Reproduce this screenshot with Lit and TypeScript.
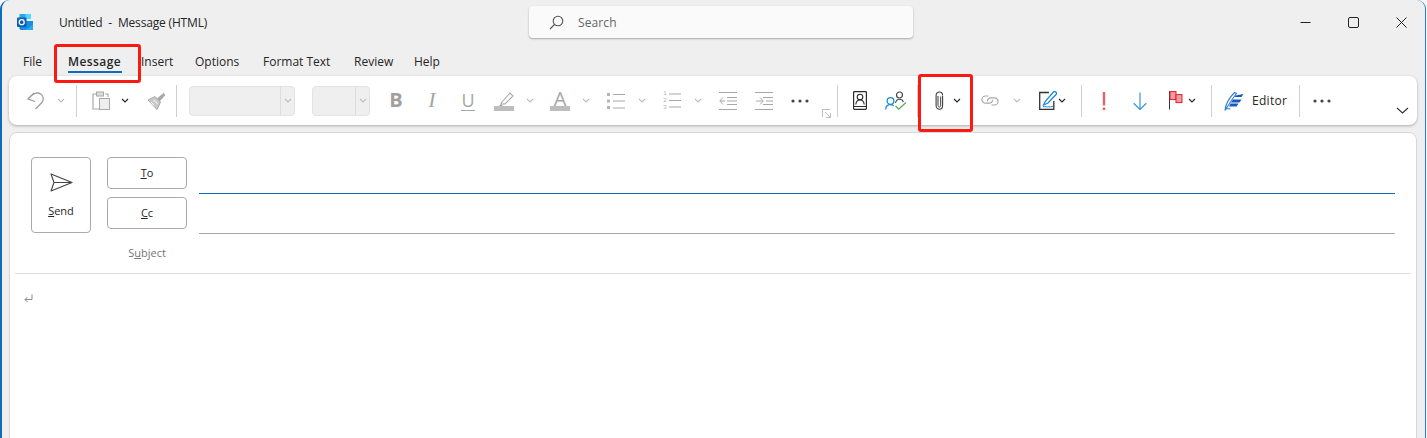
import { LitElement, html, css, svg, TemplateResult } from "lit";
import { customElement } from "lit/decorators.js";

const DIS = "#a8a8a8";
const DARK = "#2b2b2b";

const chev = (c: string) => html`<svg width="8" height="5" viewBox="0 0 8 5"><path d="M1 1l3 3 3-3" fill="none" stroke=${c} stroke-width="1.1"/></svg>`;
const ic = (w: number, h: number, body: unknown) => html`<svg width=${w} height=${h} viewBox="0 0 ${w} ${h}" fill="none">${body}</svg>`;

const undo = ic(20, 20, svg`<path d="M8 2L2 8l7 2.500M2 8C7 2 11 1 14.500 2.800c3.600 2 3.600 6.700.7 9.400L9.500 18" stroke="#9c9c9c" stroke-width="1.300"/>`);
const paste = ic(18, 19, svg`<path d="M5 3H1v15h6M13 3h3v3" stroke=${DIS} stroke-width="1.200"/><rect x="4.500" y="1" width="7" height="4" fill="#ddd" stroke=${DIS}/><rect x="7.500" y="7.500" width="10" height="11" fill="#eee" stroke=${DIS}/>`);
const brush = ic(19, 18, svg`<path d="M1 8l7-3.500 5.500 5.500L10 17.500z" fill="#c9c9c9" stroke=${DIS}/><path d="M10 6.500L16.500 1 18.500 3l-6 6.500" fill=${DIS}/><path d="M4 10l3 3.500M6.500 8l4 4" stroke="#fff"/>`);
const hilite = ic(20, 20, svg`<path d="M8 11l8-9 3 3-8 8H7z" stroke=${DIS} stroke-width="1.100"/><path d="M7 13l-2 2h4" fill=${DIS}/><rect y="15" width="20" height="5" fill="#bdbdbd"/>`);
const bullets = ic(18, 16, svg`<path d="M6 1.500h12M6 8h12M6 15h12" stroke=${DIS}/><rect y="0" width="3" height="3" fill="#b5b5b5"/><rect y="6.500" width="3" height="3" fill="#b5b5b5"/><rect y="13" width="3" height="3" fill="#b5b5b5"/>`);
const numLines = ic(12, 17, svg`<path d="M0 2h12M0 8.500h12M0 15h12" stroke=${DIS}/>`);
const numbers = html`<div class="nums"><div class="digits"><span>1</span><span>2</span><span>3</span></div>${numLines}</div>`;
const outdent = ic(18, 18, svg`<path d="M0 .5h18M0 17.500h18M8 5.500h10M8 9h10M8 12.500h10M6 9H1M4 5.500L.8 9 4 12.500" stroke=${DIS}/>`);
const indent = ic(18, 18, svg`<path d="M0 .5h18M0 17.500h18M8 5.500h10M8 12.500h10M11 9h7M1 9h7M5 5.500L8.200 9 5 12.500" stroke=${DIS}/>`);
const dots = (c: string) => ic(18, 4, svg`<circle cx="2" cy="2" r="1.600" fill=${c}/><circle cx="9" cy="2" r="1.600" fill=${c}/><circle cx="16" cy="2" r="1.600" fill=${c}/>`);
const launcher = ic(9, 9, svg`<path d="M.5 8V.5H8M3 3l5.500 5.500M8.500 4v4.500H4" stroke="#bdbdbd"/>`);
const contacts = ic(14, 19, svg`<rect x=".6" y=".6" width="12.800" height="17.800" rx=".8" stroke=${DARK} stroke-width="1.200"/><path d="M1 15.500h12" stroke=${DARK}/><circle cx="7" cy="6" r="2.800" stroke=${DARK} stroke-width="1.100"/><path d="M2.800 13.500c.3-3 2-4.500 4.200-4.500s3.900 1.500 4.200 4.500" stroke=${DARK} stroke-width="1.100"/>`);
const checkNames = ic(22, 19, svg`<circle cx="14.500" cy="4" r="3" stroke="#444" stroke-width="1.200"/><path d="M10.500 12c.5-2.500 2-3.800 4-3.800s3.300 1 3.800 2.800" stroke="#444" stroke-width="1.100"/><circle cx="5.500" cy="10" r="3.300" stroke="#1b8ad6" stroke-width="1.300"/><path d="M.7 18.500c.2-3 2.200-4.800 4.800-4.800 1.300 0 2.400.4 3.200 1.200" stroke="#1b8ad6" stroke-width="1.300"/><path d="M10.500 15l3.200 3.200L21 11.500" stroke="#4caf50" stroke-width="1.200"/>`);
const clip = ic(11, 19, svg`<path d="M8.600 5v9.500c0 2-1 3.700-3 3.700s-3.500-1.700-3.500-3.700V4.500C2.100 2.300 3.600 1 5.400 1S8.600 2.300 8.600 4.500" stroke="#3f3f3f" stroke-width="1.100"/><path d="M6.700 5.500v8.800c0 1-.5 1.800-1.300 1.800S4 15.300 4 14.300V5" stroke="#3f3f3f" stroke-width="1"/>`);
const link = ic(18, 11, svg`<path d="M7.500 1H4.500a3.600 3.600 0 0 0 0 7.200h3.500a3.600 3.600 0 0 0 3.600-3.400" stroke=${DIS} stroke-width="1.200"/><path d="M10.500 10H13.500a3.600 3.600 0 0 0 0-7.200H10a3.600 3.600 0 0 0-3.600 3.400" stroke=${DIS} stroke-width="1.200"/>`);
const signature = ic(18, 19, svg`<path d="M10 1.500H.7v16.800h14.100V10" stroke="#333" stroke-width="1.300"/><path d="M4 15.500c1.500.5 7 .5 10 0" stroke="#1b8ad6"/><path d="M4.500 14l2-4L14.500 1c1-1 3.500 0 3 2L9 12z" fill="#fff" stroke="#1b8ad6" stroke-width="1.300"/>`);
const bang = html`<svg width="4" height="18" viewBox="0 0 4 18"><rect x=".8" width="2.400" height="13.500" fill="#ea6060"/><rect x=".8" y="15.500" width="2.400" height="2.500" fill="#ea6060"/></svg>`;
const down = ic(14, 18, svg`<path d="M7 .5v17M.7 11.300L7 17.500l6.300-6.200" stroke="#3b95d8" stroke-width="1.200"/>`);
const flag = ic(14, 19, svg`<path d="M.5 0v18.500" stroke="#333"/><rect x="1" y=".6" width="6" height="8" fill="#f59ba0" stroke="#d8232a"/><rect x="7" y="3.600" width="6" height="8" fill="#f59ba0" stroke="#d8232a"/>`);
const editor = ic(20, 20, svg`<path d="M1 19.500c.6-6 4-12.500 9.500-18l2 1C8.500 7.500 5 13.500 1 19.500zM2.500 17.500l4 .5" stroke="#2f7fd0" stroke-width="1.100"/><path d="M11.500 4.500L19.500 3l-2 3h-7zM9 8.500h8.500l-2 3H7zM6.500 12.500h8l-2 3H5z" fill="#185abd"/>`);

type Item = { x: number; w: number; t: TemplateResult | string; c?: string };

const items: Item[] = [
  { x: 26, w: 20, t: undo },
  { x: 57, w: 8, t: chev("#bdbdbd") },
  { x: 76, w: 1, t: "", c: "sep" },
  { x: 92, w: 18, t: paste },
  { x: 121, w: 8, t: chev("#222") },
  { x: 147, w: 19, t: brush },
  { x: 176, w: 1, t: "", c: "sep" },
  { x: 189, w: 106, t: html`<div class="cbx-fill"></div><div class="cbx-btn">${chev("#bdbdbd")}</div>`, c: "cbx" },
  { x: 312, w: 58, t: html`<div class="cbx-fill"></div><div class="cbx-btn">${chev("#bdbdbd")}</div>`, c: "cbx" },
  { x: 386, w: 20, t: "B", c: "fb" },
  { x: 422, w: 20, t: "I", c: "fi" },
  { x: 458, w: 20, t: html`<span class="fu">U</span>`, c: "fuw" },
  { x: 494, w: 20, t: hilite },
  { x: 526, w: 8, t: chev("#bdbdbd") },
  { x: 550, w: 20, t: html`<span class="fa">A</span><span class="bar"></span>`, c: "fcol" },
  { x: 582, w: 8, t: chev("#bdbdbd") },
  { x: 607, w: 18, t: bullets },
  { x: 638, w: 8, t: chev("#bdbdbd") },
  { x: 663, w: 18, t: numbers },
  { x: 694, w: 8, t: chev("#bdbdbd") },
  { x: 719, w: 18, t: outdent },
  { x: 755, w: 18, t: indent },
  { x: 791, w: 18, t: dots("#444") },
  { x: 822, w: 9, t: launcher, c: "launch" },
  { x: 837, w: 1, t: "", c: "sep" },
  { x: 853, w: 14, t: contacts },
  { x: 885, w: 22, t: checkNames },
  { x: 917, w: 1, t: "", c: "sep" },
  { x: 934, w: 11, t: clip },
  { x: 953, w: 8, t: chev("#222") },
  { x: 981, w: 18, t: link },
  { x: 1013, w: 8, t: chev("#bdbdbd") },
  { x: 1039, w: 18, t: signature },
  { x: 1058, w: 8, t: chev("#222") },
  { x: 1081, w: 1, t: "", c: "sep" },
  { x: 1102, w: 4, t: bang },
  { x: 1133, w: 14, t: down },
  { x: 1169, w: 14, t: flag },
  { x: 1188, w: 8, t: chev("#222") },
  { x: 1211, w: 1, t: "", c: "sep" },
  { x: 1224, w: 20, t: editor },
  { x: 1252, w: 36, t: "Editor", c: "ed" },
  { x: 1299, w: 1, t: "", c: "sep" },
  { x: 1313, w: 18, t: dots("#444") },
  { x: 1396, w: 13, t: html`<svg width="13" height="7" viewBox="0 0 13 7"><path d="M1 1l5.500 5 5.500-5" fill="none" stroke="#333" stroke-width="1.100"/></svg>`, c: "collapse" },
];

const tabs: [string, number, number][] = [
  ["File", 23, 18], ["Message", 68, 54], ["Insert", 141, 32], ["Options", 195, 46],
  ["Format Text", 263, 68], ["Review", 354, 40], ["Help", 414, 27],
];

@customElement("app-root")
export class AppRoot extends LitElement {
  static styles = css`
    :host { display: block; width: 1427px; height: 438px; overflow: hidden; background: #f6f6f6;
      font-family: "Open Sans", "Noto Sans", sans-serif; font-size: 12px; color: #262626; }
    .win { position: relative; box-sizing: border-box; width: 1426px; height: 438px; background: #efefef;
      border-left: 2px solid #0f6cbd; border-right: 1.5px solid #2b7cc4; border-radius: 9px 9px 0 0; }
    .title { display: flex; align-items: center; height: 44px; }
    .title > * { flex: none; }
    .logo { margin-left: 15px; width: 16px; height: 16px; }
    .doc { margin-left: 26px; font-size: 12px; white-space: pre; letter-spacing: -.17px; width: 470px; margin-top: 1px; }
    .search { box-sizing: border-box; width: 384px; height: 32px; background: #fafafa; border-radius: 4px;
      box-shadow: 0 1px 2px rgba(0,0,0,.3); display: flex; align-items: center; color: #666;
      padding-left: 20px; gap: 14px; letter-spacing: .1px; }
    .ctrls { display: flex; align-items: center; margin-left: 368px; }
    .ctrl { width: 48px; display: flex; justify-content: center; }
    .tabs { display: flex; height: 32px; align-items: flex-start; padding: 7px 0 0 21px; box-sizing: border-box; }
    .tab { position: relative; flex: none; font-size: 12px; line-height: 22px; white-space: nowrap; }
    .tab.on { font-weight: 600; letter-spacing: .42px; }
    .tab.on::after { content: ""; position: absolute; left: 0; right: 0; top: 20px; height: 2px; background: #0f6cbd; }
    .ribbon { box-sizing: border-box; margin-left: 7px; width: 1408px; height: 49px; background: #fff; border-radius: 8px;
      box-shadow: 0 1px 3px rgba(0,0,0,.28); display: flex; align-items: center; }
    .cell { display: flex; align-items: center; justify-content: center; flex: none; line-height: 1; }
    .sep { height: 32px; background: #d0d0d0; }
    .cbx { height: 30px; box-sizing: border-box; background: #efefef; border: 1px solid #e3e3e3; border-radius: 4px; justify-content: flex-start; }
    .cbx-fill { flex: 1; }
    .cbx-btn { width: 13px; height: 100%; border-left: 1px solid #dcdcdc; display: flex; align-items: center; justify-content: center; }
    .fb { font-size: 20px; font-weight: 700; color: #a0a0a0; margin-top: -2px; }
    .fi { font-family: "Liberation Serif", serif; font-style: italic; font-size: 22px; color: #a6a6a6; margin-top: -2px; }
    .fuw { height: 20px; }
    .fu { font-size: 18px; color: #a6a6a6; border-bottom: 1px solid #a6a6a6; line-height: 19px; padding: 0; }
    .fcol { flex-direction: column; height: 20px; justify-content: flex-end; }
    .fa { font-size: 20px; line-height: 15px; color: #a6a6a6; font-weight: 400; }
    .bar { width: 20px; height: 5px; background: #bdbdbd; flex: none; }
    .launch { align-self: flex-end; margin-bottom: 7px; }
    .collapse { align-self: flex-end; margin-bottom: 11px; }
    .ed { font-size: 12px; justify-content: flex-start; letter-spacing: .3px; white-space: nowrap; }
    .nums { display: flex; gap: 2px; align-items: center; }
    .digits { width: 4px; display: flex; flex-direction: column; font: 6px/7px "Liberation Sans", sans-serif; color: #b0b0b0; align-items: center; }
    .card { box-sizing: border-box; margin: 7px 0 0 7px; width: 1408px; height: 320px; background: #fff;
      border: 1px solid #d8d8d8; border-radius: 8px 8px 0 0; padding: 24px 5px 0 5px; }
    .head { display: grid; grid-template-columns: 60px 80px 1fr; column-gap: 16px; padding-left: 16px; padding-right: 16px; }
    .send { box-sizing: border-box; grid-row: 1 / span 2; width: 60px; height: 76px; border: 1px solid #aaa; border-radius: 4px;
      display: flex; flex-direction: column; align-items: center; padding-top: 15px; gap: 12px; font-size: 11px; line-height: 14px; }
    .rcol { display: flex; flex-direction: column; gap: 8px; }
    .btn { box-sizing: border-box; width: 80px; height: 32px; border: 1px solid #aaa; border-radius: 4px; padding-bottom: 2px;
      display: flex; align-items: center; justify-content: center; font-size: 11px; }
    .lines { margin-left: -4px; }
    .ln { height: 36px; border-bottom: 1px solid #0f6cbd; }
    .ln + .ln { height: 39px; border-bottom-color: #aaa; }
    .subj { width: 80px; text-align: center; color: #767676; font-size: 11px; margin: 12px 0 0 92px; line-height: 14px; }
    .rule { height: 1px; background: #dedede; margin-top: 13px; }
    .ret { margin: 20px 0 0 9px; display: block; }
    .mark { position: absolute; box-sizing: border-box; border: 3px solid #fb1a12; border-radius: 3px; pointer-events: none; }
    .m1 { left: 52px; top: 44px; width: 87px; height: 39px; }
    .m2 { left: 916px; top: 74px; width: 55px; height: 58px; }
  `;

  private renderItems() {
    let right = 9;
    return items.map((it) => {
      const ml = it.x - right;
      right = it.x + it.w;
      return html`<div class="cell ${it.c ?? ""}" style="width:${it.w}px;margin-left:${ml}px">${it.t}</div>`;
    });
  }

  private renderTabs() {
    let right = 23;
    return tabs.map(([t, x, w]) => {
      const ml = x - right;
      right = x + w;
      return html`<div class="tab ${t === "Message" ? "on" : ""}" style="width:${w}px;margin-left:${ml}px">${t}</div>`;
    });
  }

  render() {
    return html`<div class="win">
      <div class="title">
        <svg class="logo" viewBox="0 0 16 16">
          <rect x="2.500" width="11" height="5" fill="#28a8ea"/>
          <rect x="2.500" y="4" width="6" height="11" fill="#0078d4"/>
          <rect x="8.500" y="0" width="5.500" height="5" fill="#50d9ff"/>
          <path d="M5 7l11 0v9H3z" fill="#1490df"/>
          <path d="M8 16l8-5.500V16z" fill="#28a8ea"/>
          <rect y="3.500" width="9.500" height="9.500" rx="1" fill="#0f5cb0"/>
          <circle cx="4.700" cy="8.200" r="2.500" fill="none" stroke="#fff" stroke-width="1.300"/>
        </svg>
        <div class="doc">Untitled  -  Message (HTML)</div>
        <div class="search">
          <svg width="15" height="15" viewBox="0 0 15 15" fill="none"><circle cx="9" cy="6" r="4.800" stroke="#555" stroke-width="1.100"/><path d="M5.500 9.500L1 14" stroke="#555" stroke-width="1.100"/></svg>
          <span>Search</span>
        </div>
        <div class="ctrls">
          <div class="ctrl"><svg width="11" height="11" viewBox="0 0 11 11"><path d="M.5 5.500h10" stroke="#222"/></svg></div>
          <div class="ctrl"><svg width="11" height="11" viewBox="0 0 11 11"><rect x=".5" y=".5" width="10" height="10" rx="1.500" fill="none" stroke="#222"/></svg></div>
          <div class="ctrl"><svg width="11" height="11" viewBox="0 0 11 11"><path d="M.5.500l10 10M10.500.500l-10 10" stroke="#222"/></svg></div>
        </div>
      </div>
      <div class="tabs">${this.renderTabs()}</div>
      <div class="ribbon">${this.renderItems()}</div>
      <div class="card">
        <div class="head">
          <div class="send">
            <svg width="23" height="19" viewBox="0 0 23 19" fill="none"><path d="M1 1l21 8.500L1 18l3-8.500zM4 9.500h18" stroke="#444" stroke-width="1.100" stroke-linejoin="round"/></svg>
            <span><u>S</u>end</span>
          </div>
          <div class="rcol">
            <div class="btn"><span><u>T</u>o</span></div>
            <div class="btn"><span><u>C</u>c</span></div>
          </div>
          <div class="lines"><div class="ln"></div><div class="ln"></div></div>
        </div>
        <div class="subj">S<u>u</u>bject</div>
        <div class="rule"></div>
        <svg class="ret" width="9" height="9" viewBox="0 0 9 9" fill="none"><path d="M8 .5v5H1M3.500 3L1 5.500 3.500 8" stroke="#8a8a8a"/></svg>
      </div>
      <div class="mark m1"></div>
      <div class="mark m2"></div>
    </div>`;
  }
}
